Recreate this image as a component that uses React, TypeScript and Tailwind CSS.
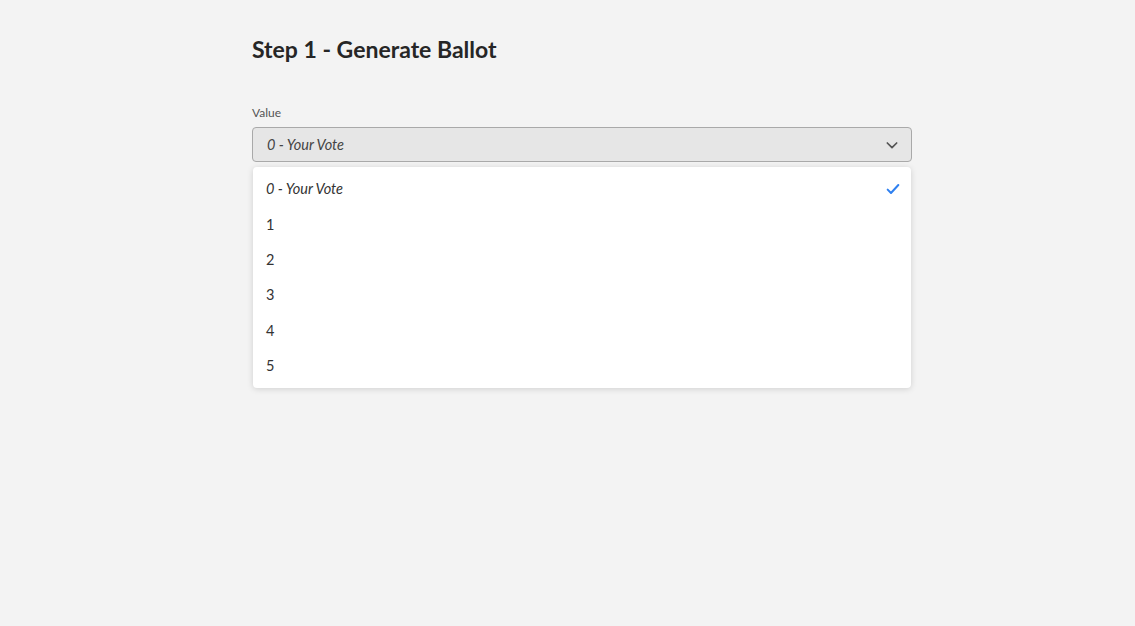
import { useState } from "react";

export default function App() {
  const options = ["0 - Your Vote", "1", "2", "3", "4", "5"];
  const [value] = useState(0);

  return (
    <div
      className="min-h-screen w-full bg-[#f3f3f3] text-[#2b2b2b]"
      style={{ fontFamily: '"Lato", "Open Sans", sans-serif' }}
    >
      <div className="w-[660px] ml-[252px] pt-[35px]">
        {/* Heading */}
        <h1 className="text-[23px] font-bold leading-[28px] text-[#262626]">
          Step 1 - Generate Ballot
        </h1>

        {/* Field */}
        <div className="mt-[42px]">
          <label className="block text-[12px] leading-[16px] text-[#555]">Value</label>
          <div className="mt-[6px] h-[35px] rounded-[4px] border border-[#a9a9a9] bg-[#e6e6e6] flex items-center justify-between pl-[14px] pr-[11px]">
            <span className="italic text-[14.5px] text-[#444]">{options[value]}</span>
            <svg width="16" height="16" viewBox="0 0 24 24" fill="none" stroke="#555" strokeWidth="2.6" strokeLinecap="round" strokeLinejoin="round">
              <path d="M5 9l7 7 7-7" />
            </svg>
          </div>

          {/* Dropdown menu */}
          <div className="mt-[5px] mx-[1px] rounded-[4px] bg-white shadow-[0_1px_6px_rgba(0,0,0,0.15)] py-[4.5px]">
            {options.map((opt, i) => (
              <div
                key={i}
                className="h-[35.4px] flex items-center justify-between pl-[13px] pr-[10px] text-[14.5px] text-[#333]"
              >
                <span className={i === 0 ? "italic" : ""}>{opt}</span>
                {i === value && (
                  <svg width="16" height="16" viewBox="0 0 24 24" fill="none" stroke="#2f80f0" strokeWidth="3" strokeLinecap="round" strokeLinejoin="round">
                    <path d="M4 13l5 5L20 6" />
                  </svg>
                )}
              </div>
            ))}
          </div>
        </div>
      </div>
    </div>
  );
}
